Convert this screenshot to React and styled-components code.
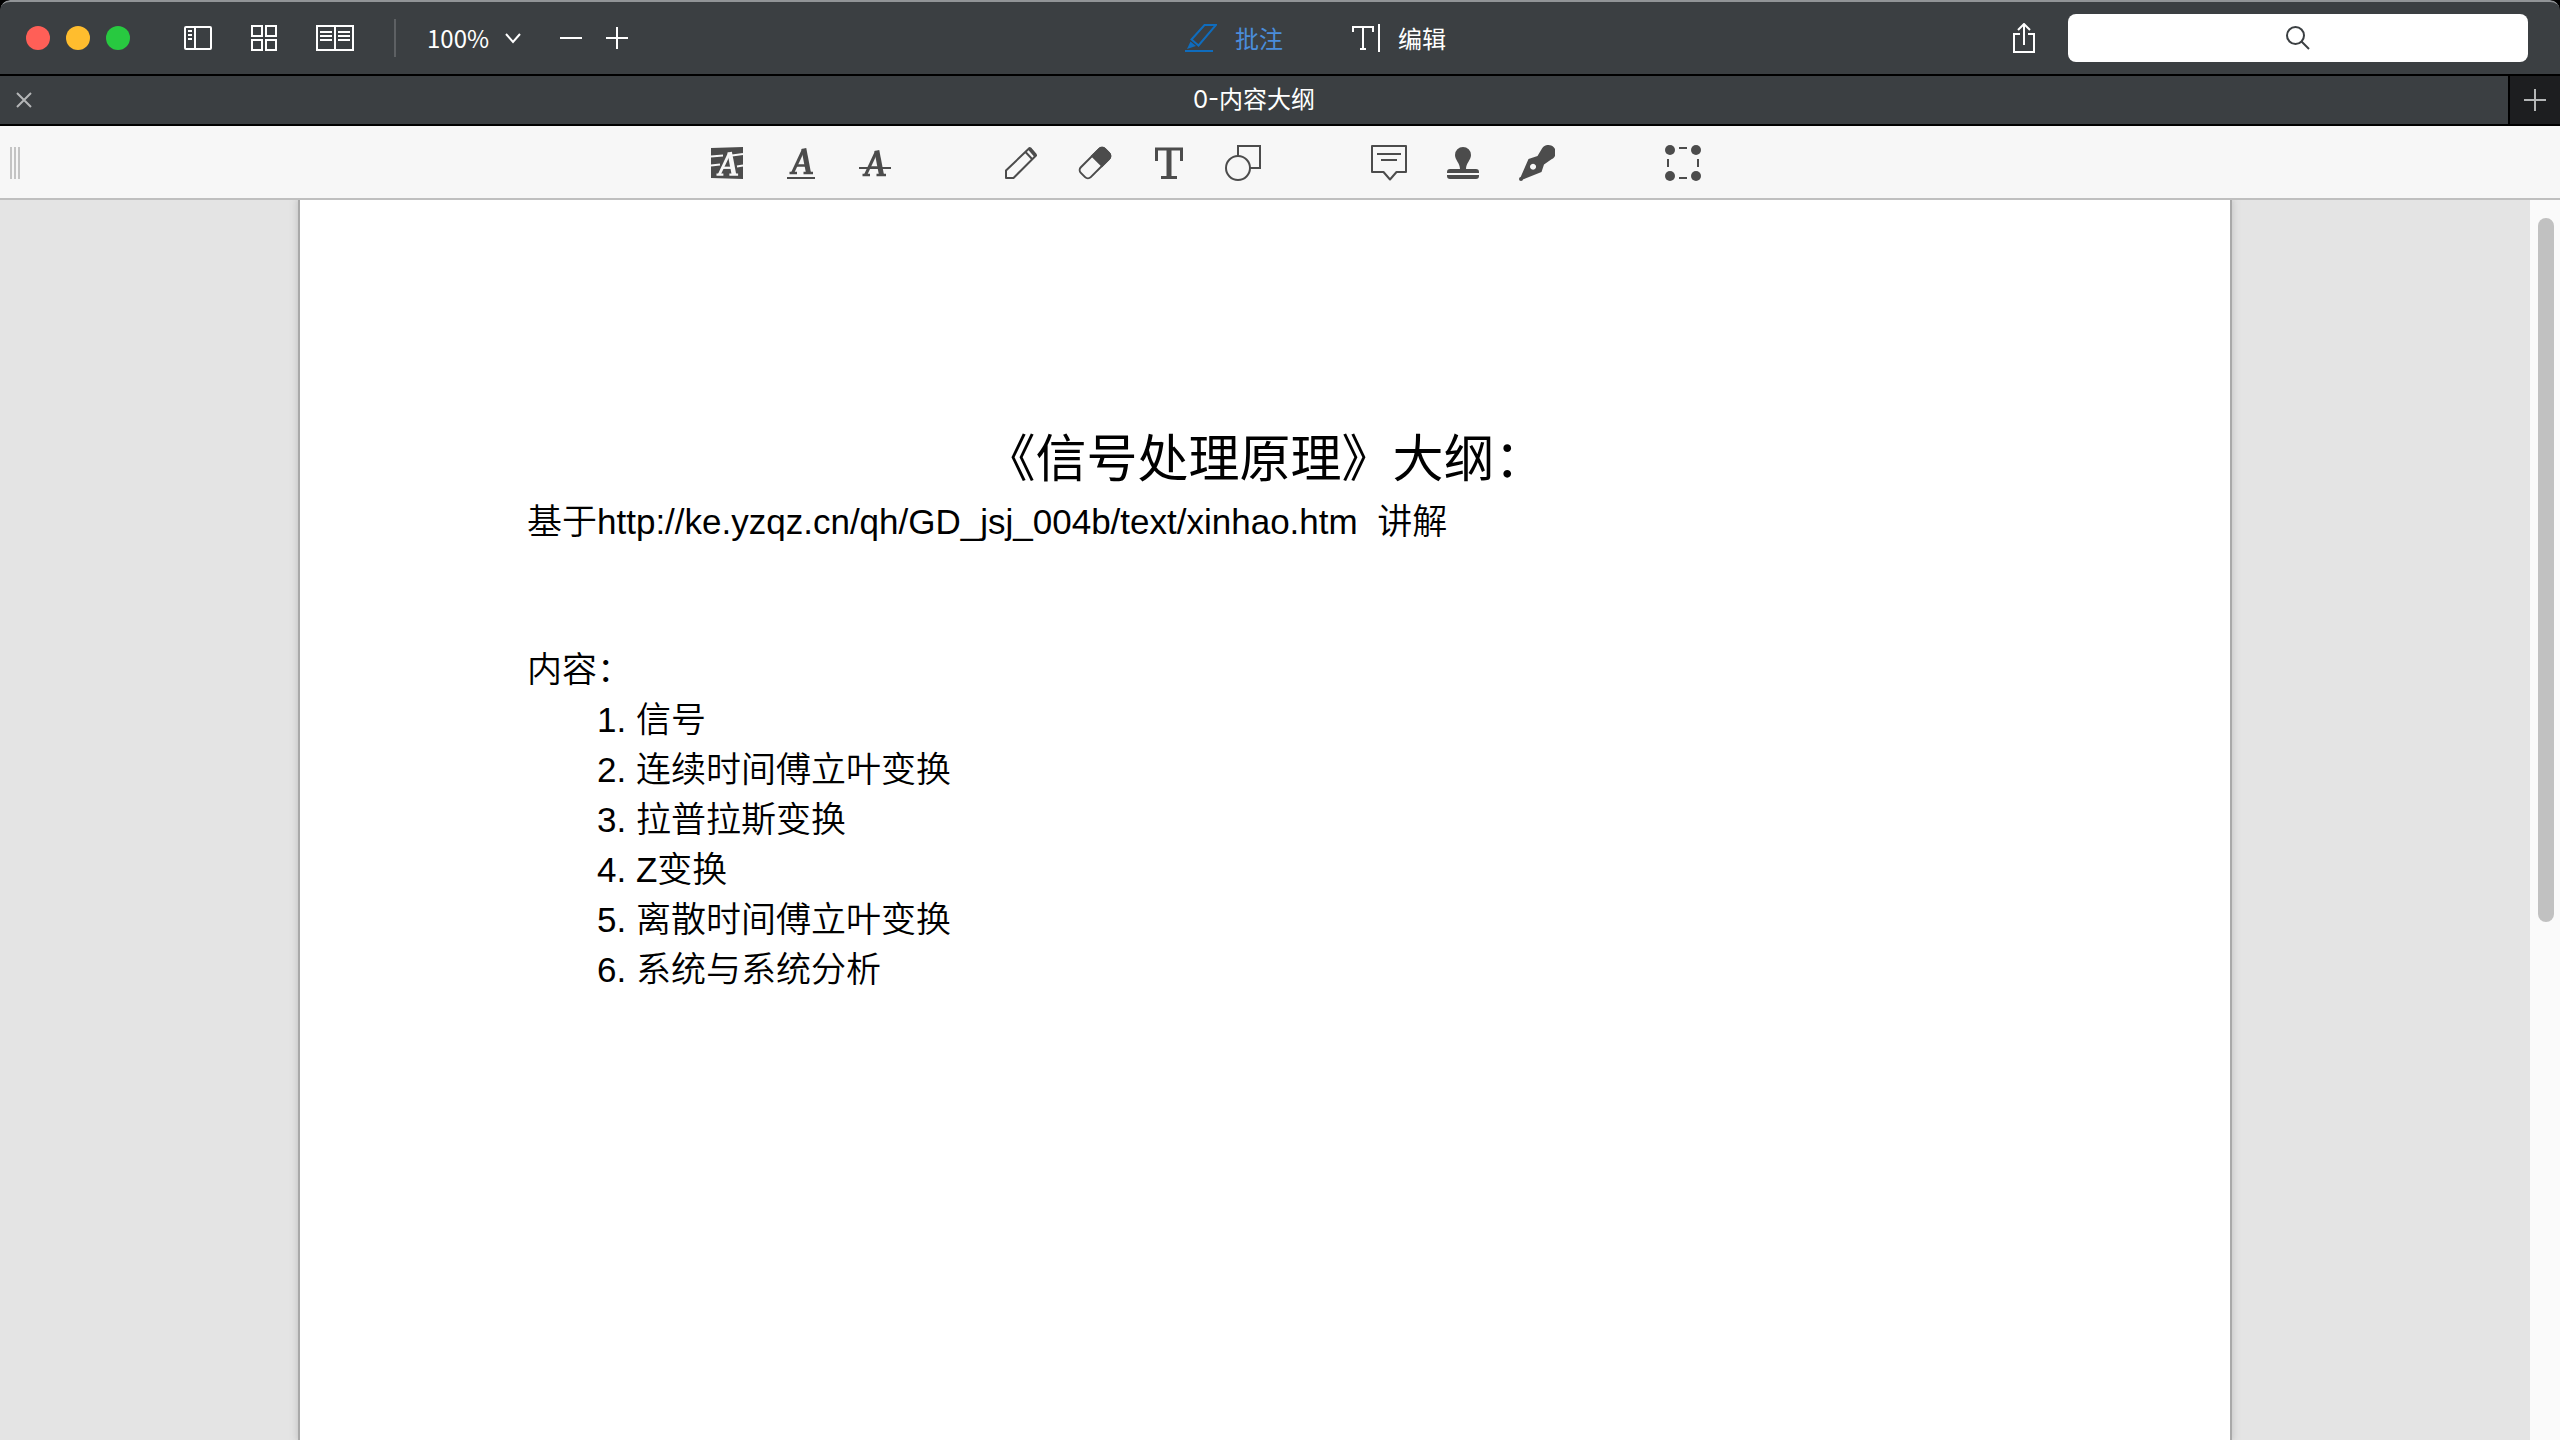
import React from "react";
import styled, { createGlobalStyle } from "styled-components";

const GlobalStyle = createGlobalStyle`
  * {
    box-sizing: border-box;
  }

  body {
    margin: 0;
    background: #000;
    font-family: "Noto Sans CJK SC", "Noto Sans", sans-serif;
  }

  button,
  input,
  select {
    font: inherit;
    color: inherit;
    margin: 0;
    padding: 0;
    border: none;
    background: none;
  }

  svg {
    display: block;
    flex: none;
  }
`;

const Window = styled.div`
  display: flex;
  flex-direction: column;
  height: 100vh;
  overflow: hidden;
  border-radius: 10px 10px 0 0;
`;

const TitleBar = styled.header`
  display: flex;
  align-items: center;
  flex: none;
  height: 76px;
  padding: 0 32px 0 26px;
  background: #3b3f42;
  border-top: 2px solid #919497;
  border-bottom: 2px solid #000;
  border-radius: 10px 10px 0 0;
  color: #fff;
  font-size: 24px;
  line-height: 36px;
`;

const Lights = styled.div`
  display: flex;
  gap: 16px;
  margin-right: 54px;
`;

const Light = styled.button`
  width: 24px;
  height: 24px;
  border-radius: 50%;
  background: ${({ color }) => color};
`;

const Group = styled.div`
  display: flex;
  align-items: center;
  gap: ${({ $gap }) => $gap}px;
`;

const IconButton = styled.button`
  display: flex;
  align-items: center;
  justify-content: center;
  cursor: pointer;
`;

const Divider = styled.div`
  width: 2px;
  height: 38px;
  margin: 0 31px 0 40px;
  background: #5d6063;
`;

const Zoom = styled.label`
  display: grid;
  align-items: center;
  margin-right: 39px;

  > * {
    grid-area: 1 / 1;
  }

  svg {
    justify-self: end;
    pointer-events: none;
  }
`;

const ZoomSelect = styled.select`
  appearance: none;
  width: 94px;
  height: 36px;
  outline: none;
`;

const Modes = styled.nav`
  display: flex;
  gap: 69px;
  margin: 0 auto;
`;

const Mode = styled.button`
  display: flex;
  align-items: center;
  gap: 18px;
  color: ${({ $active }) => ($active ? "#4a8ddc" : "#fff")};
  cursor: pointer;
`;

const ShareButton = styled(IconButton)`
  padding: 0 10px;
  margin-right: 23px;
`;

const Search = styled.label`
  display: grid;
  width: 460px;
  height: 48px;
  align-items: center;
  background: #fff;
  border-radius: 8px;
  color: #3b3f42;

  > * {
    grid-area: 1 / 1;
  }

  svg {
    justify-self: center;
    pointer-events: none;
  }
`;

const SearchInput = styled.input`
  width: 100%;
  height: 100%;
  padding: 0 16px;
  outline: none;
`;

const TabBar = styled.div`
  display: flex;
  flex: none;
  height: 50px;
  background: #3b3f42;
  border-bottom: 2px solid #000;
  color: #fff;
`;

const Tab = styled.div`
  display: grid;
  grid-template-columns: 32px 1fr 32px;
  align-items: center;
  flex: 1;
  font-family: Inter, "Noto Sans CJK SC", sans-serif;
  font-size: 24px;
  line-height: 38px;
  text-align: center;
`;

const CloseTab = styled(IconButton)`
  justify-content: flex-end;
  height: 100%;
`;

const NewTab = styled(IconButton)`
  width: 52px;
  background: #1d1e20;
  border-left: 2px solid #000;
  color: #b4b6b7;
`;

const Tools = styled.div`
  display: flex;
  align-items: center;
  flex: none;
  height: 74px;
  padding: 0 160px 0 10px;
  background: #f7f7f7;
  box-shadow: inset 0 -2px #bfbfbf;
`;

const Grip = styled.div`
  width: 10px;
  height: 32px;
  margin-right: -10px;
  border: solid #c4c4c4;
  border-width: 0 2px;
  background: linear-gradient(#c4c4c4, #c4c4c4) center / 2px 100% no-repeat;
`;

const ToolGroups = styled.div`
  display: flex;
  gap: 72px;
  margin: 0 auto;
`;

const ToolGroup = styled.div`
  display: flex;
`;

const Tool = styled(IconButton)`
  width: 74px;
  height: 72px;
  color: #4c4c4c;
`;

const Viewer = styled.main`
  display: flex;
  flex: 1;
  min-height: 0;
  background: #e4e4e4;
`;

const Canvas = styled.div`
  display: flex;
  justify-content: center;
  flex: 1;
  overflow: hidden;
`;

const Sheet = styled.article`
  width: 100%;
  max-width: 1930px;
  padding: 223px 227px 0;
  background: #fff;
  box-shadow: 0 0 0 2px #a9a9a9, 0 0 8px 2px #bdbdbd;
  color: #000;
  font-family: "Liberation Sans", "Noto Sans CJK SC", sans-serif;
  font-size: 35px;
  font-weight: 350;
  line-height: 50px;
`;

const Heading = styled.h1`
  margin: 0;
  font-size: 51px;
  font-weight: 400;
  line-height: 74px;
  text-align: center;
`;

const Line = styled.p`
  margin: 0 0 ${({ $after }) => $after || 0}px;
  white-space: pre-wrap;
`;

const Outline = styled.ol`
  margin: 0;
  padding-left: 70px;
  list-style: none;
`;

const ScrollTrack = styled.div`
  flex: none;
  width: 30px;
  padding: 18px 6px 18px 8px;
  background: #fafafa;
`;

const ScrollThumb = styled.div`
  height: 704px;
  max-height: 100%;
  border-radius: 8px;
  background: #c1c1c1;
`;

const Glyph = ({ w = 36, h = 36, stroke = 2, children }) => (
  <svg
    width={w}
    height={h}
    viewBox={`0 0 ${w} ${h}`}
    fill="none"
    stroke="currentColor"
    strokeWidth={stroke}
    aria-hidden="true"
  >
    {children}
  </svg>
);

const SidebarIcon = () => (
  <Glyph w={28} h={24}>
    <rect x="1" y="1" width="26" height="22" rx="1" />
    <path d="M11 1v22M4 5h4M4 9h4M4 13h4" />
  </Glyph>
);

const GridIcon = () => (
  <Glyph w={26} h={26}>
    <path d="M1 1h10v10H1zM15 1h10v10H15zM1 15h10v10H1zM15 15h10v10H15z" />
  </Glyph>
);

const BookIcon = () => (
  <Glyph w={38} h={26}>
    <path d="M1 1h36v24H1zM19 1v24" />
    <path d="M4 7h12M4 11h12M4 15h12M22 7h12M22 11h12M22 15h12" />
  </Glyph>
);

const ChevronIcon = () => (
  <Glyph w={16} h={12}>
    <path d="M1 2l7 8 7-8" />
  </Glyph>
);

const MinusIcon = () => (
  <Glyph w={22} h={22}>
    <path d="M0 11h22" />
  </Glyph>
);

const PlusIcon = () => (
  <Glyph w={22} h={22}>
    <path d="M0 11h22M11 0v22" />
  </Glyph>
);

const CloseIcon = () => (
  <Glyph w={16} h={16}>
    <path d="M1 1l14 14M15 1L1 15" stroke="#b4b6b7" />
  </Glyph>
);

const MarkerIcon = () => (
  <Glyph w={32} h={28}>
    <g stroke="#0f6cbd">
      <path d="M19.5 1H31L13.5 21.5 6.5 15.5z" />
      <path d="M5.5 17.5l5.5 4.500-9 3z" fill="#0f6cbd" stroke="none" />
      <path d="M0 27h28" />
    </g>
  </Glyph>
);

const EditIcon = () => (
  <Glyph w={28} h={28}>
    <path d="M1 8V3h20v5M11 3v22M8 25h6M27 0v28" />
  </Glyph>
);

const ShareIcon = () => (
  <Glyph w={22} h={30}>
    <path d="M7 11H1v18h20V11h-6M11 22V2M5 7l6-6 6 6" />
  </Glyph>
);

const SearchIcon = () => (
  <Glyph w={24} h={24}>
    <circle cx="9.500" cy="9.500" r="8.500" />
    <path d="M15.500 15.500L23 23" />
  </Glyph>
);

const LetterMark = ({ x = 0, y = 0, color = "currentColor" }) => (
  <g transform={`translate(${x} ${y})`} stroke={color}>
    <path d="M20.500 5.500L9.500 29" strokeWidth="3" />
    <path d="M20.800 4.500L25.500 29" strokeWidth="5" />
    <path d="M13 21.500h11" strokeWidth="2.500" />
    <path d="M6.500 29H14M20.500 29H30" strokeWidth="2.500" />
  </g>
);

const HighlightIcon = () => (
  <Glyph>
    <path d="M2 3l32-1v32L2 33z" fill="currentColor" stroke="none" />
    <path d="M2 11.500l12-1M23 10.500l11-1.500M2 20.500l9-1M28 21.500l6-1" stroke="#f7f7f7" />
    <g transform="translate(1.500 3) scale(.92)">
      <LetterMark color="#f7f7f7" />
    </g>
  </Glyph>
);

const UnderlineIcon = () => (
  <Glyph>
    <LetterMark y={-1} />
    <path d="M4 33h28" />
  </Glyph>
);

const StrikeIcon = () => (
  <Glyph>
    <LetterMark x={-1} y={1} />
    <path d="M2 23h32" />
  </Glyph>
);

const PencilIcon = () => (
  <Glyph>
    <path d="M26.500 3L33 10.500 10.500 33H3v-7.500z" strokeLinejoin="round" />
    <path d="M22.500 7l7 7.500" />
    <path d="M26.500 3.500L32.500 10.500" strokeWidth="3.500" />
  </Glyph>
);

const EraserIcon = () => (
  <Glyph>
    <g transform="translate(18 18) rotate(-45)">
      <rect x="-17" y="-7" width="34" height="14" rx="4" />
      <path d="M3 -7h10a4 4 0 0 1 4 4v6a4 4 0 0 1-4 4H3z" fill="currentColor" />
    </g>
  </Glyph>
);

const TextIcon = () => (
  <Glyph>
    <path d="M5.500 16V4h25v12" strokeWidth="3" />
    <path d="M18 4v29" strokeWidth="5" />
    <path d="M10 32.500h16" strokeWidth="3" />
  </Glyph>
);

const ShapesIcon = () => (
  <Glyph>
    <circle cx="13" cy="23" r="12" />
    <path d="M13 11V1h22v22H25" />
  </Glyph>
);

const NoteIcon = () => (
  <Glyph>
    <path d="M1 1h34v26h-9.500L19 34.500 12.500 27H1z" strokeLinejoin="round" />
    <path d="M6 9h24M10 15h16" />
  </Glyph>
);

const StampIcon = () => (
  <Glyph>
    <g fill="currentColor" stroke="none">
      <path d="M18 2a8 8 0 0 1 8 8c0 5-5 8-5 14h-6c0-6-5-9-5-14a8 8 0 0 1 8-8z" />
      <path d="M2 28v-1a3 3 0 0 1 3-3h26a3 3 0 0 1 3 3v1zM2 30h32v1a3 3 0 0 1-3 3H5a3 3 0 0 1-3-3z" />
    </g>
  </Glyph>
);

const PenIcon = () => (
  <Glyph>
    <g fill="currentColor" stroke="none">
      <path
        fillRule="evenodd"
        d="M1 33.500L9.500 14l9-3L23 3.500a7.500 7.500 0 1 1 9.500 10.800L25 19.500l-2.500 7.500L2.500 35zM14 18.700a3 3 0 1 0 .1 0z"
      />
      <circle cx="2" cy="34" r="2" />
    </g>
  </Glyph>
);

const SelectIcon = () => (
  <Glyph>
    <g fill="currentColor" stroke="none">
      <circle cx="5" cy="5" r="5" />
      <circle cx="31" cy="5" r="5" />
      <circle cx="5" cy="31" r="5" />
      <circle cx="31" cy="31" r="5" />
    </g>
    <path d="M14 3h8M14 33h8M3 14v8M33 14v8" />
  </Glyph>
);

const toolGroups = [
  [
    ["高亮", HighlightIcon],
    ["下划线", UnderlineIcon],
    ["删除线", StrikeIcon],
  ],
  [
    ["铅笔", PencilIcon],
    ["橡皮擦", EraserIcon],
    ["文本", TextIcon],
    ["形状", ShapesIcon],
  ],
  [
    ["注释", NoteIcon],
    ["图章", StampIcon],
    ["签名", PenIcon],
  ],
  [["选择", SelectIcon]],
];

const chapters = [
  "信号",
  "连续时间傅立叶变换",
  "拉普拉斯变换",
  "Z变换",
  "离散时间傅立叶变换",
  "系统与系统分析",
];

const App = () => {
  return (
    <Window lang="zh-CN">
      <GlobalStyle />
      <TitleBar>
        <Lights>
          <Light color="#ff5f57" aria-label="关闭" />
          <Light color="#ffbd2e" aria-label="最小化" />
          <Light color="#28c940" aria-label="缩放" />
        </Lights>
        <Group $gap={39}>
          <IconButton aria-label="边栏"><SidebarIcon /></IconButton>
          <IconButton aria-label="缩略图"><GridIcon /></IconButton>
          <IconButton aria-label="双页"><BookIcon /></IconButton>
        </Group>
        <Divider />
        <Zoom>
          <ZoomSelect aria-label="缩放比例" defaultValue="100%">
            <option>100%</option>
          </ZoomSelect>
          <ChevronIcon />
        </Zoom>
        <Group $gap={24}>
          <IconButton aria-label="缩小"><MinusIcon /></IconButton>
          <IconButton aria-label="放大"><PlusIcon /></IconButton>
        </Group>
        <Modes>
          <Mode $active>
            <MarkerIcon />
            批注
          </Mode>
          <Mode>
            <EditIcon />
            编辑
          </Mode>
        </Modes>
        <ShareButton aria-label="共享"><ShareIcon /></ShareButton>
        <Search>
          <SearchInput type="text" aria-label="搜索" />
          <SearchIcon />
        </Search>
      </TitleBar>

      <TabBar>
        <Tab>
          <CloseTab aria-label="关闭标签页"><CloseIcon /></CloseTab>
          <span>0-内容大纲</span>
        </Tab>
        <NewTab aria-label="新标签页"><PlusIcon /></NewTab>
      </TabBar>

      <Tools>
        <Grip />
        <ToolGroups>
          {toolGroups.map((group) => (
            <ToolGroup key={group[0][0]}>
              {group.map(([name, Icon]) => (
                <Tool key={name} aria-label={name}>
                  <Icon />
                </Tool>
              ))}
            </ToolGroup>
          ))}
        </ToolGroups>
      </Tools>

      <Viewer>
        <Canvas>
          <Sheet>
            <Heading>《信号处理原理》大纲：</Heading>
            <Line $after={98}>
              基于http://ke.yzqz.cn/qh/GD_jsj_004b/text/xinhao.htm{"  "}讲解
            </Line>
            <Line>内容：</Line>
            <Outline>
              {chapters.map((chapter, i) => (
                <li key={chapter}>{`${i + 1}. ${chapter}`}</li>
              ))}
            </Outline>
          </Sheet>
        </Canvas>
        <ScrollTrack>
          <ScrollThumb />
        </ScrollTrack>
      </Viewer>
    </Window>
  );
};

export default App;
